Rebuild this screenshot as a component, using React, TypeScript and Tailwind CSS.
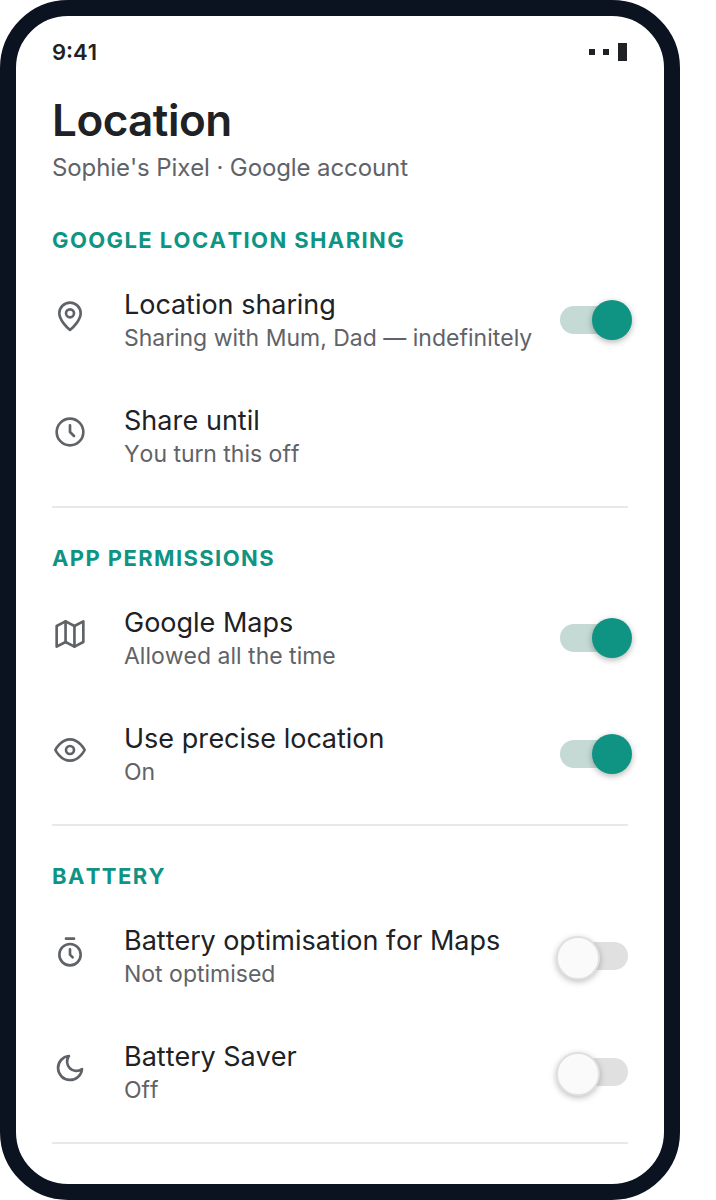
import React from 'react';

const Icon = ({ children }: { children: React.ReactNode }) => (
  <svg viewBox="0 0 24 24" width="32" height="32" fill="none" stroke="#5f6368" strokeWidth="2" strokeLinecap="round" strokeLinejoin="round">
    {children}
  </svg>
);

const PinIcon = () => (
  <Icon>
    <path d="M20 10c0 5-5.500 10.500-8 12.500-2.500-2-8-7.500-8-12.500a8 8 0 0 1 16 0Z" />
    <circle cx="12" cy="10" r="3" />
  </Icon>
);

const ClockIcon = () => (
  <Icon>
    <circle cx="12" cy="12" r="10" />
    <path d="M12 7v5l3 3" />
  </Icon>
);

const MapIcon = () => (
  <Icon>
    <path d="M2 6l6.670-3.500 6.670 3.500 6.660-3.500v15.500l-6.660 3.500-6.670-3.500-6.670 3.500Z" />
    <path d="M8.670 2.500v15.500M15.330 6v15.500" />
  </Icon>
);

const EyeIcon = () => (
  <Icon>
    <path d="M1 12s4-8 11-8 11 8 11 8-4 8-11 8-11-8-11-8Z" />
    <circle cx="12" cy="12" r="3" />
  </Icon>
);

const TimerIcon = () => (
  <Icon>
    <path d="M9 2h6" />
    <circle cx="12" cy="14" r="8" />
    <path d="M12 10v4l2 2" />
  </Icon>
);

const MoonIcon = () => (
  <Icon>
    <path d="M21 12.800A9 9 0 1 1 11.200 3a7 7 0 0 0 9.800 9.800Z" />
  </Icon>
);

const Toggle = ({ on }: { on: boolean }) => (
  <div className="relative w-[68px] h-7">
    <div className={`h-7 rounded-full ${on ? 'bg-[#c5dad4]' : 'bg-[#e0e0e0]'}`} />
    {on ? (
      <div className="absolute right-[-4px] top-[-6px] w-10 h-10 rounded-full bg-[#0f9484] shadow-[0_2px_6px_rgba(0,0,0,0.3)]" />
    ) : (
      <div className="absolute left-[-4px] top-[-6px] w-11 h-11 rounded-full bg-[#fafafa] border-2 border-[#e0e0e0] shadow-[0_2px_6px_rgba(0,0,0,0.25)]" />
    )}
  </div>
);

const Row = ({ icon, title, sub, on }: { icon: React.ReactNode; title: string; sub: string; on?: boolean }) => (
  <div className="flex items-center h-[116px]">
    <div className="w-[72px] shrink-0 flex pl-[2px] mb-[9px]">{icon}</div>
    <div className="flex-1 pt-[2px]">
      <div className="text-[27px] leading-[34px] text-[#202124]">{title}</div>
      <div className="text-[23px] leading-[32px] text-[#5f6368]">{sub}</div>
    </div>
    {on !== undefined && <Toggle on={on} />}
  </div>
);

const Section = ({ label, children }: { label: string; children: React.ReactNode }) => (
  <div className="border-b-2 border-[#e8e8ea] h-[318px] pt-[37px]">
    <div className="h-[26px] mb-[9px] text-[22px] leading-[26px] font-bold tracking-[1.4px] text-[#0f9484]">{label}</div>
    {children}
  </div>
);

export default function App() {
  return (
    <div className="w-[716px] h-[1200px] bg-white [font-kerning:none]" style={{ fontFamily: 'Inter, sans-serif' }}>
      <div className="w-[680px] h-[1200px] border-[16px] border-[#0b1320] rounded-[68px] overflow-hidden bg-white px-9">
        <div className="flex items-center justify-between h-[28px] pt-[22px] box-content">
          <span className="text-[22px] font-semibold text-[#202124]">9:41</span>
          <div className="flex items-center gap-[8px] mr-[1px]">
            <div className="w-1.5 h-1.5 bg-[#202124]" />
            <div className="w-1.5 h-1.5 bg-[#202124]" />
            <div className="ml-[1px] w-[9px] h-[18px] bg-[#202124]" />
          </div>
        </div>
        <h1 className="mt-[26px] text-[44px] leading-[56px] font-semibold tracking-[-0.44px] text-[#202124]">Location</h1>
        <p className="mt-[4px] mb-[6px] text-[24px] leading-[32px] tracking-[-0.1px] text-[#5f6368]">Sophie's Pixel · Google account</p>
        <Section label="GOOGLE LOCATION SHARING">
          <Row icon={<PinIcon />} title="Location sharing" sub="Sharing with Mum, Dad — indefinitely" on={true} />
          <Row icon={<ClockIcon />} title="Share until" sub="You turn this off" />
        </Section>
        <Section label="APP PERMISSIONS">
          <Row icon={<MapIcon />} title="Google Maps" sub="Allowed all the time" on={true} />
          <Row icon={<EyeIcon />} title="Use precise location" sub="On" on={true} />
        </Section>
        <Section label="BATTERY">
          <Row icon={<TimerIcon />} title="Battery optimisation for Maps" sub="Not optimised" on={false} />
          <Row icon={<MoonIcon />} title="Battery Saver" sub="Off" on={false} />
        </Section>
      </div>
    </div>
  );
}
